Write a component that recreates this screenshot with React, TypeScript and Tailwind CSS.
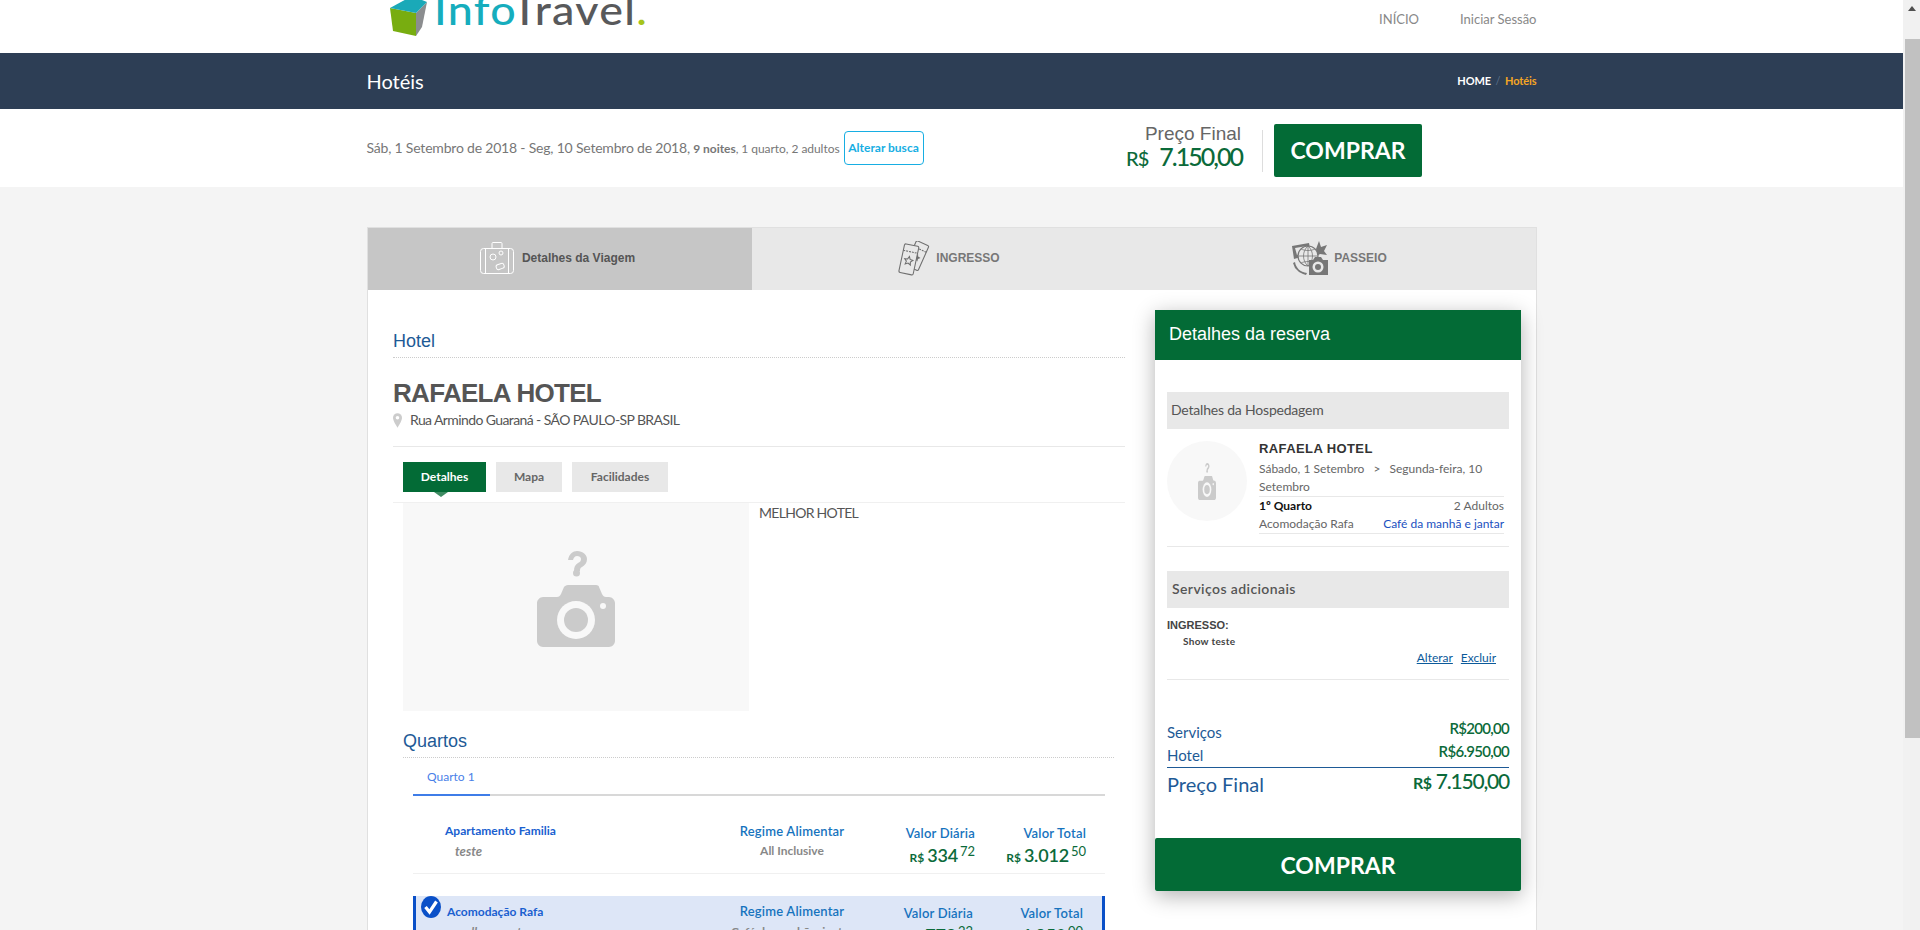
import React from "react";

const lato = "font-['Lato',sans-serif]";
const arial = "font-['Liberation_Sans',Arial,sans-serif]";

function NoPhoto({ className = "" }: { className?: string }) {
  return (
    <svg viewBox="0 0 78 96" preserveAspectRatio="none" className={className}>
      <path d="M31 9c1-6 5-9 9-9 6 0 10 4 10 8 0 4-2 6-5 8-2 1-2 2-2 4h-6c0-4 1-6 4-8 2-1 3-2 3-4s-2-3-4-3-3 1-4 4z" fill="#cbcbcb" />
      <circle cx="39.500" cy="22" r="3.500" fill="#cbcbcb" />
      <path d="M6 46h14c2 0 3-1 4-3l3-7c1-1 2-2 4-2h28c2 0 3 1 3 2l3 7c1 2 2 3 4 3h3c3 0 6 3 6 6v38c0 3-3 6-6 6H6c-3 0-6-3-6-6V52c0-3 3-6 6-6z" fill="#cbcbcb" />
      <circle cx="39" cy="69" r="19" fill="#f8f8f8" />
      <circle cx="39" cy="69" r="12" fill="#cbcbcb" />
      <circle cx="66" cy="55" r="3" fill="#f8f8f8" />
    </svg>
  );
}

function Suitcase() {
  return (
    <svg viewBox="0 0 34 32" className="h-[32px] w-[34px]" fill="none" stroke="#fff" strokeWidth="1">
      <rect x="0.500" y="6.500" width="33" height="25" rx="3" />
      <path d="M5.500 6.500v25M28.500 6.500v25M12 6.500V1.500c0-.6.4-1 1-1h8c.6 0 1 .4 1 1v5" />
      <circle cx="13" cy="15" r="3" />
      <circle cx="21" cy="11" r="2" />
      <rect x="16" y="22" width="8" height="5" rx="2" transform="rotate(-20 20 24)" />
    </svg>
  );
}

function Tickets() {
  return (
    <svg viewBox="0 0 36 36" className="h-[35px] w-[36px]" fill="none" stroke="#6f6f6f" strokeWidth="1.100">
      {/* bilhete de tras */}
      <g transform="rotate(24 22 16)">
        <rect x="15" y="1" width="14" height="28" rx="1.500" />
        <path d="M15 8h14" strokeDasharray="2 1" />
        <path d="M22 13l1.200 2.500 2.800.3-2 2 .5 2.700-2.500-1.300-2.500 1.300.5-2.700-2-2 2.800-.3z" fill="#6f6f6f" stroke="none" />
      </g>
      {/* bilhete da frente */}
      <g transform="rotate(12 14 20)">
        <rect x="6" y="4" width="15" height="30" rx="1.500" fill="#e8e8e8" />
        <path d="M6 11h15" strokeDasharray="2 1" />
        <path d="M13.500 16l1.300 2.800 3 .4-2.200 2.100.6 3-2.700-1.500-2.700 1.500.6-3-2.200-2.100 3-.4z" fill="none" />
      </g>
    </svg>
  );
}

function Passeio() {
  return (
    <svg viewBox="0 0 36 34" className="h-[34px] w-[36px]">
      <path d="M0 5l17-3 2 11-17 5z" fill="#777" />
      <path d="M3 7l12-2 1 6-11 3z" fill="#e8e8e8" />
      <path d="M27 0l2 6 6-2-3 6 3 4-7-1-3 2-1-7z" fill="#777" />
      <circle cx="16" cy="15" r="10" fill="#e8e8e8" stroke="#777" strokeWidth="1.200" />
      <path d="M6 15h20M16 5v20M9 8c4 2 10 2 14 0M9 22c4-2 10-2 14 0M16 5c-6 5-6 15 0 20M16 5c6 5 6 15 0 20" fill="none" stroke="#777" strokeWidth=".8" />
      <path d="M3 21c1 6 5 10 12 11l-1 2-3-1-4-2-4-4-2-5z" fill="#777" />
      <path d="M17 19h4l2-3h6l2 3h5v15H17z" fill="#777" />
      <circle cx="26" cy="26" r="5.500" fill="#e8e8e8" />
      <circle cx="26" cy="26" r="3" fill="#777" />
    </svg>
  );
}

function Price({ whole, cents }: { whole: string; cents: string }) {
  return (
    <div className={`text-[#0b6a3a] leading-[24px] whitespace-nowrap ${lato}`}>
      <span className="text-[12px] font-bold mr-[3px]">R$</span>
      <span className="text-[18px] font-semibold tracking-[-0.2px]">{whole}</span>
      <span className="text-[13px] ml-[2px] relative top-[-6px]">{cents}</span>
    </div>
  );
}

const rowLabel = `text-[13px] leading-[20px] font-semibold tracking-[0.2px] text-[#1673be] ${lato}`;

export default function App() {
  return (
    <div className={`flex h-[930px] overflow-hidden bg-[#f4f4f4] text-[#555] ${lato}`}>
      <div className="flex-1 min-w-0">
        {/* TOPO */}
        <div className="h-[53px] bg-white overflow-hidden">
          <div className="w-[1170px] mx-auto flex justify-between">
            <div className="flex ml-[23px] -mt-[12px]">
              <svg viewBox="0 0 37 48" className="h-[48px] w-[37px] shrink-0">
                <path d="M0 20l26 5v23L3 43z" fill="#78ad10" />
                <path d="M26 25l11-11-5 25-6 9z" fill="#8b8d8f" />
                <path d="M0 20L22 8l15 6-11 11z" fill="#1aa9b8" />
              </svg>
              <div className="ml-[7px] -mt-[2px] text-[40px] leading-[49px] tracking-[1.2px] whitespace-nowrap font-medium scale-x-[1.12] origin-left">
                <span className="text-[#16adbd]">Info</span>
                <span className="text-[#58595b]">Travel</span>
                <span className="text-[#a6c41c]">.</span>
              </div>
            </div>
            <div className="flex gap-[41px] text-[13px] leading-[38px] text-[#888]">
              <span>INÍCIO</span>
              <span>Iniciar Sessão</span>
            </div>
          </div>
        </div>

        {/* TITULO */}
        <div className="h-[56px] bg-[#2d3e55]">
          <div className="w-[1170px] mx-auto h-full flex items-center justify-between">
            <h1 className="text-[20px] text-white font-normal">Hotéis</h1>
            <div className="text-[11px] font-bold text-white tracking-[-0.1px]">
              HOME <span className="text-[#5c7089] font-normal mx-[2px]">/</span>{" "}
              <span className="text-[#f5a623]">Hotéis</span>
            </div>
          </div>
        </div>

        {/* BUSCA */}
        <div className="h-[78px] bg-white">
          <div className="w-[1170px] mx-auto h-full flex items-center">
            <div className="mb-[2px] text-[14px] text-[#777] whitespace-nowrap tracking-[-0.2px]">
              Sáb, 1 Setembro de 2018 - Seg, 10 Setembro de 2018,{" "}
              <span className="text-[12px] tracking-[-0.05px]"><b className="font-bold">9 noites</b>, 1 quarto, 2 adultos</span>
            </div>
            <button className="ml-[4px] h-[34px] w-[80px] rounded-[4px] border border-[#17aee3] text-[12px] font-bold text-[#17aee3] whitespace-nowrap">
              Alterar busca
            </button>
            <div className="ml-auto mr-[114.500px] mt-[5px] flex items-center">
              <div className="text-right -mt-[8px]">
                <div className={`text-[19px] leading-[21px] text-[#666] mr-[1px] ${arial}`}>Preço Final</div>
                <div className="text-[#0b6a3a] text-[20px] leading-[24px] font-medium tracking-[-1px] whitespace-nowrap">
                  R$ <span className="ml-[7px] text-[25px] tracking-[-2px]">7.150,00</span>
                </div>
              </div>
              <div className="w-px h-[42px] bg-[#ddd] ml-[20px] mr-[11px]" />
              <button className="w-[148px] h-[53px] bg-[#036b36] rounded-[2px] text-white text-[23px] font-bold">COMPRAR</button>
            </div>
          </div>
        </div>

        {/* CARD */}
        <div className="w-[1170px] mx-auto mt-[40px] bg-white border border-[#e0e0e0] h-[800px]">
          <div className="flex h-[62px] bg-[#e8e8e8] text-[12px] font-bold">
            <div className={`w-[384px] bg-[#c6c6c6] pr-[4px] pb-[2px] flex items-center justify-center gap-[8px] text-[#555] ${arial}`}>
              <Suitcase />
              <span>Detalhes da Viagem</span>
            </div>
            <div className={`flex-1 pb-[2px] flex items-center justify-center gap-[5px] text-[#777] ${arial}`}>
              <Tickets />
              <span>INGRESSO</span>
            </div>
            <div className={`flex-1 pb-[2px] flex items-center justify-center gap-[6px] text-[#777] ${arial}`}>
              <Passeio />
              <span>PASSEIO</span>
            </div>
          </div>

          <div className="flex pl-[25.500px]">
            {/* ESQUERDA */}
            <div className="w-[732px] shrink-0">
              <div className="pt-[40px] pb-[5px] border-b border-dotted border-[#ccc]">
                <h2 className={`text-[18px] leading-[22px] text-[#1e5a96] ${arial}`}>Hotel</h2>
              </div>
              <h2 className={`mt-[20px] text-[26px] leading-[30px] font-bold tracking-[-0.7px] text-[#555] ${arial}`}>RAFAELA HOTEL</h2>
              <div className="mt-[2px] flex items-center text-[14px] leading-[20px] tracking-[-0.6px] text-[#555]">
                <svg viewBox="0 0 10 16" className="w-[9px] h-[15px] mr-[8px]">
                  <path d="M5 0a5 5 0 0 1 5 5c0 3-3 8-5 11C3 13 0 8 0 5a5 5 0 0 1 5-5z" fill="#ccc" />
                  <circle cx="5" cy="5" r="2" fill="#fff" />
                </svg>
                Rua Armindo Guaraná - SÃO PAULO-SP BRASIL
              </div>
              <div className="mt-[16px] border-t border-[#e8e8e8]" />

              <div className="mt-[15px] ml-[10px] flex gap-[10px] text-[12px] font-bold">
                <div className="relative w-[83px] h-[30px] bg-[#036b36] text-white flex items-center justify-center">
                  Detalhes
                  <span className="absolute top-[30px] left-[31px] w-0 h-0 border-x-[7px] border-x-transparent border-t-[5px] border-t-[#3f8c63]" />
                </div>
                <div className="w-[66px] h-[30px] bg-[#e8e8e8] text-[#666] flex items-center justify-center">Mapa</div>
                <div className="w-[96px] h-[30px] bg-[#e8e8e8] text-[#666] flex items-center justify-center">Facilidades</div>
              </div>
              <div className="mt-[10px] border-t border-[#f0f0f0]" />

              <div className="flex pl-[10px]">
                <div className="w-[346px] h-[208px] bg-[#f8f8f8] flex items-center justify-center shrink-0">
                  <NoPhoto className="w-[78px] h-[96px] mb-[16px]" />
                </div>
                <p className="ml-[10px] text-[14px] leading-[20px] tracking-[-0.7px] text-[#555]">MELHOR HOTEL</p>
              </div>

              <div className="ml-[10px] mr-[11px] mt-[19px] pb-[5px] border-b border-dotted border-[#ccc]">
                <h2 className={`text-[18px] leading-[22px] text-[#1e5a96] ${arial}`}>Quartos</h2>
              </div>

              <div className="ml-[20px] mr-[20px]">
                <div className="flex h-[38px] border-b-2 border-[#d8d8d8]">
                  <div className="w-[77px] h-[38px] border-b-2 border-[#3f7de8] text-[12px] leading-[38px] text-[#4a7fe8] pl-[14px]">
                    Quarto 1
                  </div>
                </div>

                <div className="flex h-[78px] pt-[25px] border-b border-[#f0f0f0]">
                  <div className="w-[290px] pl-[32px]">
                    <div className="text-[12px] leading-[20px] font-bold text-[#1a5fd0]">Apartamento Familia</div>
                    <div className="pl-[10px] text-[13px] leading-[20px] font-bold italic text-[#888]">teste</div>
                  </div>
                  <div className="w-[178px] text-center">
                    <div className={rowLabel}>Regime Alimentar</div>
                    <div className="text-[12px] leading-[20px] font-bold text-[#888]">All Inclusive</div>
                  </div>
                  <div className="w-[94px] text-right pt-[2px]">
                    <div className={rowLabel}>Valor Diária</div>
                    <div className="flex justify-end"><Price whole="334" cents="72" /></div>
                  </div>
                  <div className="w-[111px] text-right pt-[2px]">
                    <div className={rowLabel}>Valor Total</div>
                    <div className="flex justify-end"><Price whole="3.012" cents="50" /></div>
                  </div>
                </div>

                <div className="mt-[22px] flex h-[90px] bg-[#dde6f7] border-x-[3px] border-[#0a50c8]">
                  <div className="w-[287px] flex pl-[5px]">
                    <svg viewBox="0 0 20 22" className="w-[20px] h-[22px] shrink-0">
                      <ellipse cx="10" cy="11" rx="10" ry="11" fill="#0a50c8" />
                      <path d="M4.500 11l4 5L15.500 5.500" fill="none" stroke="#fff" strokeWidth="3.200" />
                    </svg>
                    <div className="ml-[6px] pt-[6px]">
                      <div className="text-[12px] leading-[20px] font-bold text-[#1a5fd0]">Acomodação Rafa</div>
                      <div className="pl-[9px] text-[12px] leading-[20px] font-bold italic text-[#888]">melhor quarto</div>
                    </div>
                  </div>
                  <div className="w-[178px] text-center pt-[5px]">
                    <div className={rowLabel}>Regime Alimentar</div>
                    <div className="mt-[1px] text-[12px] leading-[20px] font-bold text-[#888]">Café da manhã e jantar</div>
                  </div>
                  <div className="w-[92px] text-right pt-[7px]">
                    <div className={rowLabel}>Valor Diária</div>
                    <div className="flex justify-end"><Price whole="772" cents="22" /></div>
                  </div>
                  <div className="w-[110px] text-right pt-[7px]">
                    <div className={rowLabel}>Valor Total</div>
                    <div className="flex justify-end"><Price whole="6.950" cents="00" /></div>
                  </div>
                </div>
              </div>
            </div>

            {/* RESERVA */}
            <div className="ml-[30px] mt-[20px] w-[366px] h-[581px] shrink-0 bg-white shadow-[0_5px_20px_rgba(0,0,0,0.3)]">
              <div className={`h-[50px] bg-[#036b36] pl-[14px] text-[18px] leading-[48px] text-white ${arial}`}>Detalhes da reserva</div>
              <div className="px-[12px]">
                <div className="mt-[32px] h-[37px] bg-[#e8e8e8] pl-[4px] text-[14px] leading-[35px] tracking-[-0.2px] text-[#555]">Detalhes da Hospedagem</div>
                <div className="mt-[12px] flex">
                  <div className="w-[80px] h-[80px] rounded-full bg-[#f8f8f8] flex items-center justify-center shrink-0">
                    <NoPhoto className="w-[18px] h-[37px]" />
                  </div>
                  <div className="ml-[12px] w-[245px]">
                    <div className={`text-[13px] leading-[16px] font-bold tracking-[0.4px] text-[#333] ${arial}`}>RAFAELA HOTEL</div>
                    <div className="mt-[3px] text-[12px] leading-[18px] text-[#666]">
                      Sábado, 1 Setembro <span className="mx-[6px]">&gt;</span> Segunda-feira, 10 Setembro
                    </div>
                    <div className="border-t border-[#e8e8e8] flex justify-between text-[12px] leading-[18px]">
                      <b className="font-bold text-[#111]">1º Quarto</b>
                      <span className="text-[#666]">2 Adultos</span>
                    </div>
                    <div className="border-b border-[#e8e8e8] flex justify-between text-[12px] leading-[18px] pb-0">
                      <span className="text-[#666]">Acomodação Rafa</span>
                      <span className="text-[#1a50c0]">Café da manhã e jantar</span>
                    </div>
                  </div>
                </div>
                <div className="mt-[12px] border-t border-[#e8e8e8]" />
                <div className="mt-[24px] h-[37px] bg-[#e8e8e8] pl-[5px] text-[14px] leading-[35px] font-semibold tracking-[0.4px] text-[#555]">Serviços adicionais</div>
                <div className={`mt-[9px] text-[11px] leading-[16px] font-bold text-[#444] ${arial}`}>INGRESSO:</div>
                <div className="pt-[1px] pl-[16px] text-[10px] leading-[14px] font-bold text-[#444] tracking-[0.3px]">Show teste</div>
                <div className="mt-[2px] flex justify-end gap-[8px] pr-[13px] text-[12px] leading-[16px] text-[#0b5a9a] underline">
                  <span>Alterar</span>
                  <span>Excluir</span>
                </div>
                <div className="mt-[13px] border-t border-[#e8e8e8]" />

                <div className="mt-[40px] flex justify-between text-[15px] leading-[24px] text-[#1e5a96]">
                  <span>Serviços</span>
                  <span className="-mt-[4px] font-semibold tracking-[-0.7px] text-[#0b6a3a]">R$200,00</span>
                </div>
                <div className="flex justify-between text-[15px] leading-[23px] text-[#1e5a96] border-b border-[#1e5a96] h-[24px]">
                  <span>Hotel</span>
                  <span className="-mt-[4px] font-semibold tracking-[-0.7px] text-[#0b6a3a]">R$6.950,00</span>
                </div>
                <div className="mt-[2px] flex justify-between text-[20px] leading-[28px] text-[#1e5a96]">
                  <span>Preço Final</span>
                  <span className="-mt-[3px] text-[21px] font-medium tracking-[-1.2px] text-[#0b6a3a]">
                    <span className="text-[16px] font-bold tracking-[-0.5px]">R$</span> 7.150,00
                  </span>
                </div>
              </div>
              <button className="mt-[40px] w-full h-[53px] pt-[2px] bg-[#036b36] rounded-[2px] text-white text-[23px] font-bold">COMPRAR</button>
            </div>
          </div>
        </div>
      </div>

      {/* BARRA DE ROLAGEM */}
      <div className="w-[17px] shrink-0 bg-[#f1f1f1] flex flex-col items-end">
        <svg viewBox="0 0 8 5" className="w-[8px] h-[5px] mt-[6px] mr-[4px]">
          <path d="M4 0l4 5H0z" fill="#505050" />
        </svg>
        <div className="mt-[28px] w-[15px] h-[699px] bg-[#c1c1c1]" />
      </div>
    </div>
  );
}
